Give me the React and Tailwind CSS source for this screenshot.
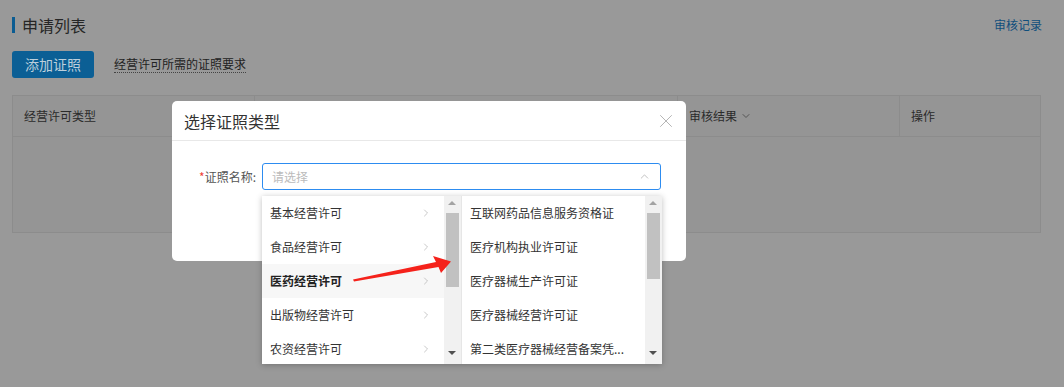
import { ChevronRight, ChevronUp, ChevronDown, X } from "lucide-react";

const leftItems = ["基本经营许可", "食品经营许可", "医药经营许可", "出版物经营许可", "农资经营许可"];
const rightItems = ["互联网药品信息服务资格证", "医疗机构执业许可证", "医疗器械生产许可证", "医疗器械经营许可证", "第二类医疗器械经营备案凭..."];

const Scrollbar = ({ thumbTop, thumbHeight }) => (
    <div className="relative w-[17px] h-full bg-[#f1f1f1] shrink-0">
        <div className="absolute left-[4px] top-[5px] w-0 h-0 border-x-[4px] border-x-transparent border-b-[4px] border-b-[#a3a3a3]"></div>
        <div className="absolute left-[2px] w-[13px] bg-[#c1c1c1]" style={{ top: thumbTop, height: thumbHeight }}></div>
        <div className="absolute left-[4px] bottom-[9px] w-0 h-0 border-x-[4px] border-x-transparent border-t-[4px] border-t-[#505050]"></div>
    </div>
)

const App = () => {
    return (
        <div className="relative w-[1064px] h-[387px] overflow-hidden bg-[#999999] font-['Noto_Sans_CJK_SC','Noto_Sans',sans-serif]">
            {/* page behind the mask */}
            <div className="px-3 pt-[15px]">
                <div className="flex items-center justify-between">
                    <div className="flex items-center">
                        <span className="w-[3px] h-[16px] bg-[#0b5c92]"></span>
                        <span className="ml-[7px] text-[16px] leading-[20px] text-[#262626]">申请列表</span>
                    </div>
                    <span className="mr-[10px] text-[12px] text-[#104e7c]">审核记录</span>
                </div>

                <div className="flex items-center mt-[16px]">
                    <button className="w-[82px] h-[27px] rounded-[3px] bg-[#0b5f95] text-[14px] text-[#bccfdc]">添加证照</button>
                    <span className="ml-[20px] text-[12px] leading-[16px] text-[#222] border-b border-dotted border-[#444]">经营许可所需的证照要求</span>
                </div>

                <div className="mt-[17px] mr-[11px] h-[138px] border border-[#8c8c8c] bg-[#959595]">
                    <div className="flex h-[41px] border-b border-[#8c8c8c] text-[12px] text-[#2b2b2b]">
                        <div className="w-[242px] pl-[11px] flex items-center border-r border-[#8c8c8c]">经营许可类型</div>
                        <div className="w-[423px] border-r border-[#8c8c8c]"></div>
                        <div className="w-[222px] pl-[11px] flex items-center border-r border-[#8c8c8c]">
                            审核结果 <ChevronDown size={12} className="ml-[3px] text-[#555]" />
                        </div>
                        <div className="flex-1 pl-[11px] flex items-center">操作</div>
                    </div>
                </div>
            </div>

            {/* dialog */}
            <div className="absolute left-[172px] top-[101px] w-[514px] h-[160px] bg-white rounded-[5px]">
                <div className="flex items-center justify-between h-[40px] pl-[12px] pr-[9px] border-b border-[#e8e8e8]">
                    <span className="text-[16px] text-[#333]">选择证照类型</span>
                    <X size={22} strokeWidth={0.8} className="text-[#999]" />
                </div>
                <div className="flex items-center mt-[22px]">
                    <span className="w-[90px] pr-[6px] text-right text-[12px] text-[#555]"><span className="text-[#f04134]">*</span>证照名称:</span>
                    <div className="w-[399px] h-[27px] rounded-[3px] border border-[#2d8cf0] flex items-center justify-between px-[9px]">
                        <span className="text-[12px] text-[#bbbbbb]">请选择</span>
                        <ChevronUp size={13} strokeWidth={1.3} className="text-[#aaa]" />
                    </div>
                </div>
            </div>

            {/* cascader dropdown */}
            <div className="absolute left-[262px] top-[196px] w-[400px] h-[168px] bg-white flex shadow-[0_1px_6px_rgba(0,0,0,0.25)] text-[12px] text-[#333]">
                <div className="flex w-[200px] h-full border-r border-[#e6e6e6]">
                    <div className="flex-1">
                        {leftItems.map((item, i) => (
                            <div key={item} className={`h-[34px] flex items-center justify-between pl-[8px] pr-[12px] ${i === 2 ? 'bg-[#f7f7f7] font-bold text-[#222]' : ''}`}>
                                <span>{item}</span>
                                <ChevronRight size={12} strokeWidth={1.3} className="text-[#aaa]" />
                            </div>
                        ))}
                    </div>
                    <Scrollbar thumbTop={17} thumbHeight={74} />
                </div>
                <div className="flex flex-1 h-full">
                    <div className="flex-1">
                        {rightItems.map((item) => (
                            <div key={item} className="h-[34px] flex items-center pl-[8px]">
                                <span>{item}</span>
                            </div>
                        ))}
                    </div>
                    <Scrollbar thumbTop={17} thumbHeight={66} />
                </div>
            </div>

            {/* red annotation arrow */}
            <svg className="absolute left-0 top-0" width="1064" height="387">
                <polygon points="353,279.5 436,262 433,256 451,261.5 441,273 438.5,267 354,281.5" fill="#f5221b" />
            </svg>
        </div>
    )
}

export default App
